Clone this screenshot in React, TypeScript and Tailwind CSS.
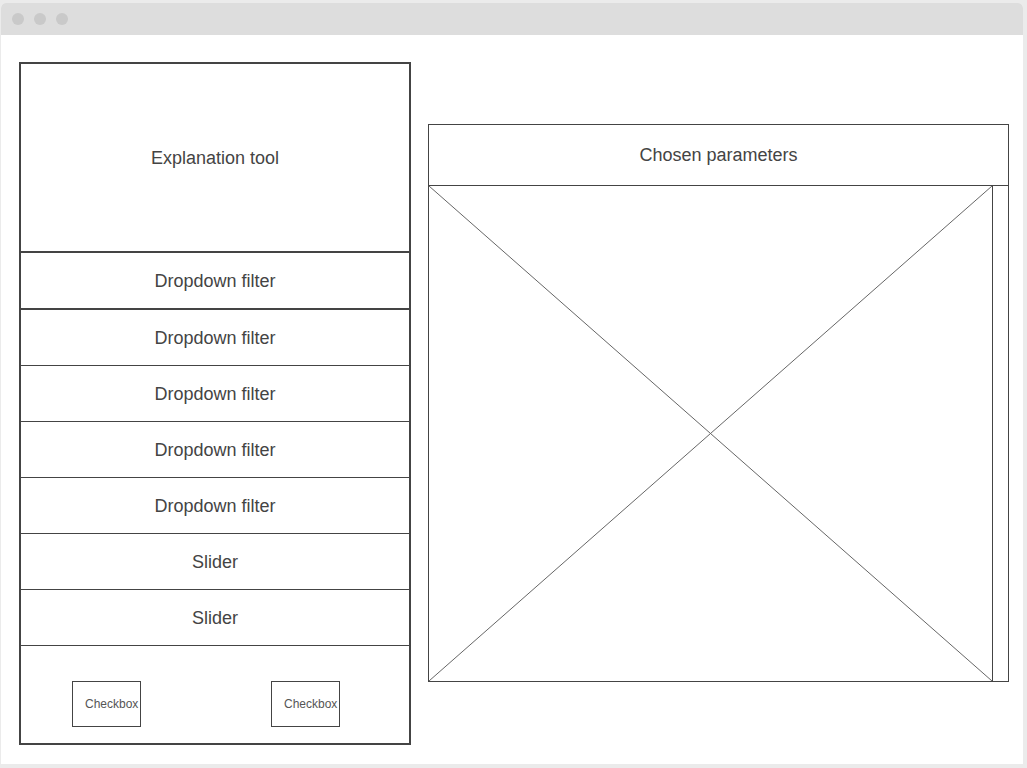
const filters = [
  "Dropdown filter",
  "Dropdown filter",
  "Dropdown filter",
  "Dropdown filter",
  "Slider",
  "Slider",
];

function Checkbox() {
  return (
    <div className="flex h-[46px] w-[69px] items-center border border-[#444] pl-[12px] text-[12px] whitespace-nowrap text-[#555]">
      Checkbox
    </div>
  );
}

export default function App() {
  return (
    <div
      className="h-[768px] w-[1027px] bg-[#ebebeb] pt-[3px] pl-[1px]"
      style={{ fontFamily: '"Liberation Sans", Arial, sans-serif' }}
    >
      <div className="flex h-[761px] w-[1022px] flex-col overflow-hidden rounded-t-[5px] bg-white">
        {/* title bar */}
        <div className="flex h-[32px] shrink-0 items-center gap-[10px] bg-[#dddddd] pl-[11px]">
          <span className="h-[12px] w-[12px] rounded-full bg-[#c9c9c9]" />
          <span className="h-[12px] w-[12px] rounded-full bg-[#c9c9c9]" />
          <span className="h-[12px] w-[12px] rounded-full bg-[#c9c9c9]" />
        </div>

        <div className="flex items-start pt-[27px] pl-[18px]">
          {/* filter panel */}
          <div className="flex h-[683px] w-[392px] flex-col border-2 border-[#444] text-[18px] text-[#444]">
            <div className="flex h-[189px] items-center justify-center border-b-2 border-[#444] pt-[1px]">
              Explanation tool
            </div>
            <div className="flex h-[57px] items-center justify-center border-b-2 border-[#444] pt-[2px]">
              Dropdown filter
            </div>
            {filters.map((label, i) => (
              <div
                key={i}
                className="flex h-[56px] items-center justify-center border-b border-[#444] pt-[2px]"
              >
                {label}
              </div>
            ))}
            <div className="flex flex-1 items-start gap-[130px] pt-[35px] pl-[51px]">
              <Checkbox />
              <Checkbox />
            </div>
          </div>

          {/* chart panel */}
          <div className="mt-[62px] ml-[17px] flex h-[558px] w-[581px] flex-col border border-[#444]">
            <div className="flex h-[61px] shrink-0 items-center justify-center border-b border-[#444] pt-[1px] text-[18px] text-[#444]">
              Chosen parameters
            </div>
            <div className="flex min-h-0 flex-1">
              <div className="relative flex-1 border-r border-[#444]">
                <svg
                  className="absolute inset-0 h-full w-full"
                  viewBox="0 0 100 100"
                  preserveAspectRatio="none"
                >
                  <line
                    x1="0"
                    y1="0"
                    x2="100"
                    y2="100"
                    stroke="#666"
                    strokeWidth="1"
                    vectorEffect="non-scaling-stroke"
                  />
                  <line
                    x1="100"
                    y1="0"
                    x2="0"
                    y2="100"
                    stroke="#666"
                    strokeWidth="1"
                    vectorEffect="non-scaling-stroke"
                  />
                </svg>
              </div>
              <div className="w-[15px]" />
            </div>
          </div>
        </div>
      </div>
    </div>
  );
}
